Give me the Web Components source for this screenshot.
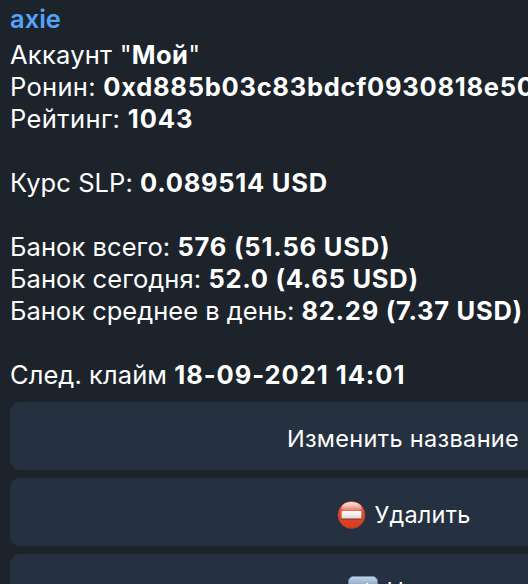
<!DOCTYPE html>
<html lang="ru">
<head>
<meta charset="utf-8">
<title>axie</title>
<style>
html, body{
    margin: 0;
    height: 584px;
    overflow: hidden;
    background: #1c232b;
}
body{
    font-family: Inter, "Noto Sans", sans-serif;
    color: #fff;
}
</style>
</head>
<body>
<chat-view>
    <chat-message name="axie">
        <message-line style="--label-spacing: .25px; --value-spacing: .4px">Аккаунт "<b slot="value">Мой</b><span slot="after">"</span></message-line>
        <message-line style="--label-spacing: .3px">Ронин: <b slot="value">0xd885b03c83bdcf0930818e50</b></message-line>
        <message-line style="--label-spacing: .4px; --value-spacing: .9px">Рейтинг: <b slot="value">1043</b></message-line>
        <message-line></message-line>
        <message-line>Курс SLP: <b slot="value">0.089514 USD</b></message-line>
        <message-line></message-line>
        <message-line style="--value-spacing: .8px">Банок всего: <b slot="value">576 (51.56 USD)</b></message-line>
        <message-line>Банок сегодня: <b slot="value">52.0 (4.65 USD)</b></message-line>
        <message-line style="--label-spacing: 0">Банок среднее в день: <b slot="value">82.29 (7.37 USD)</b></message-line>
        <message-line></message-line>
        <message-line style="--value-spacing: .95px">След. клайм <b slot="value">18-09-2021 14:01</b></message-line>
    </chat-message>
    <inline-button>Изменить название</inline-button>
    <inline-button style="letter-spacing: .2px"><emoji-icon slot="icon" type="stop"></emoji-icon>Удалить</inline-button>
    <inline-button><emoji-icon slot="icon" type="back"></emoji-icon>Назад</inline-button>
</chat-view>

<script>
const define = (name, html, setup) => {
    const template = document.createElement('template');
    template.innerHTML = html;
    customElements.define(name, class extends HTMLElement {
        constructor(){
            super();
            this.attachShadow({mode:'open'});
            this.shadowRoot.appendChild(template.content.cloneNode(true));
            if (setup) setup(this);
        }
    });
};

define('chat-view', `
<style>
:host{
    display: flex;
    flex-direction: column;
    align-items: flex-start;
    gap: 8px;
    box-sizing: border-box;
    width: 100%;
    height: 584px;
    overflow: hidden;
    padding-left: 10px;
}
</style>
<slot></slot>
`);

define('chat-message', `
<style>
:host{
    display: block;
    flex: none;
    height: 394px;
    font-size: 25.5px;
}
.name{
    height: 39px;
    line-height: 38px;
    font-weight: 600;
    color: #55a3f8;
}
</style>
<div class="name"></div>
<slot></slot>
`, el => {
    el.shadowRoot.querySelector('.name').textContent = el.getAttribute('name');
});

define('message-line', `
<style>
:host{
    display: block;
    height: 32px;
    line-height: 32px;
    letter-spacing: var(--label-spacing, .07px);
}
div{
    white-space: pre;
}
::slotted(b){
    font-weight: 700;
    letter-spacing: var(--value-spacing, .73px);
}
</style>
<div><slot></slot><slot name="value"></slot><slot name="after"></slot></div>
`);

// buttons are wider than the window and run off its right edge
define('inline-button', `
<style>
:host{
    display: flex;
    flex: none;
    align-items: center;
    justify-content: center;
    gap: 9px;
    width: 786px;
    height: 68px;
    box-sizing: border-box;
    padding-top: 5px;
    border-radius: 10px;
    background: #253040;
    font-size: 23.5px;
    letter-spacing: .33px;
}
</style>
<slot name="icon"></slot><span><slot></slot></span>
`);

const icons = {
    stop: `
<svg width="30" height="30" viewBox="0 0 30 30">
    <defs>
        <linearGradient id="red" x1="0" y1="0" x2="0" y2="1">
            <stop offset="0" stop-color="#f08a70"/>
            <stop offset=".4" stop-color="#df4d30"/>
            <stop offset="1" stop-color="#d63b1d"/>
        </linearGradient>
        <linearGradient id="shine" x1="0" y1="0" x2="0" y2="1">
            <stop offset="0" stop-color="#fff" stop-opacity=".8"/>
            <stop offset="1" stop-color="#fff" stop-opacity="0"/>
        </linearGradient>
        <linearGradient id="bar" x1="0" y1="0" x2="0" y2="1">
            <stop offset="0" stop-color="#fff"/>
            <stop offset="1" stop-color="#d9d9d9"/>
        </linearGradient>
    </defs>
    <circle cx="15.5" cy="15" r="13.5" fill="url(#red)" stroke="#b93d27" stroke-width=".6"/>
    <ellipse cx="15.5" cy="7.5" rx="10" ry="5.5" fill="url(#shine)"/>
    <rect x="5" y="11" width="21" height="8.5" rx=".5" fill="#8f2c1b"/>
    <rect x="5.5" y="11" width="20" height="7.6" rx=".5" fill="url(#bar)"/>
</svg>`,
    back: `
<svg width="30" height="30" viewBox="0 0 30 30">
    <defs>
        <linearGradient id="blue" x1="0" y1="0" x2="0" y2="1">
            <stop offset="0" stop-color="#c5d6e6"/>
            <stop offset=".3" stop-color="#8fa9c6"/>
            <stop offset="1" stop-color="#6485ad"/>
        </linearGradient>
    </defs>
    <rect x=".5" y=".5" width="29" height="29" rx="5" fill="url(#blue)" stroke="#7189a5"/>
    <path d="M20 6.5V12h6v6h-6v5.5L5 15z" fill="#fff"/>
</svg>`
};

define('emoji-icon', `
<style>
:host{
    display: block;
    width: 30px;
    height: 30px;
}
svg{
    display: block;
}
</style>
<div></div>
`, el => {
    el.shadowRoot.querySelector('div').innerHTML = icons[el.getAttribute('type')];
});
</script>
</body>
</html>
